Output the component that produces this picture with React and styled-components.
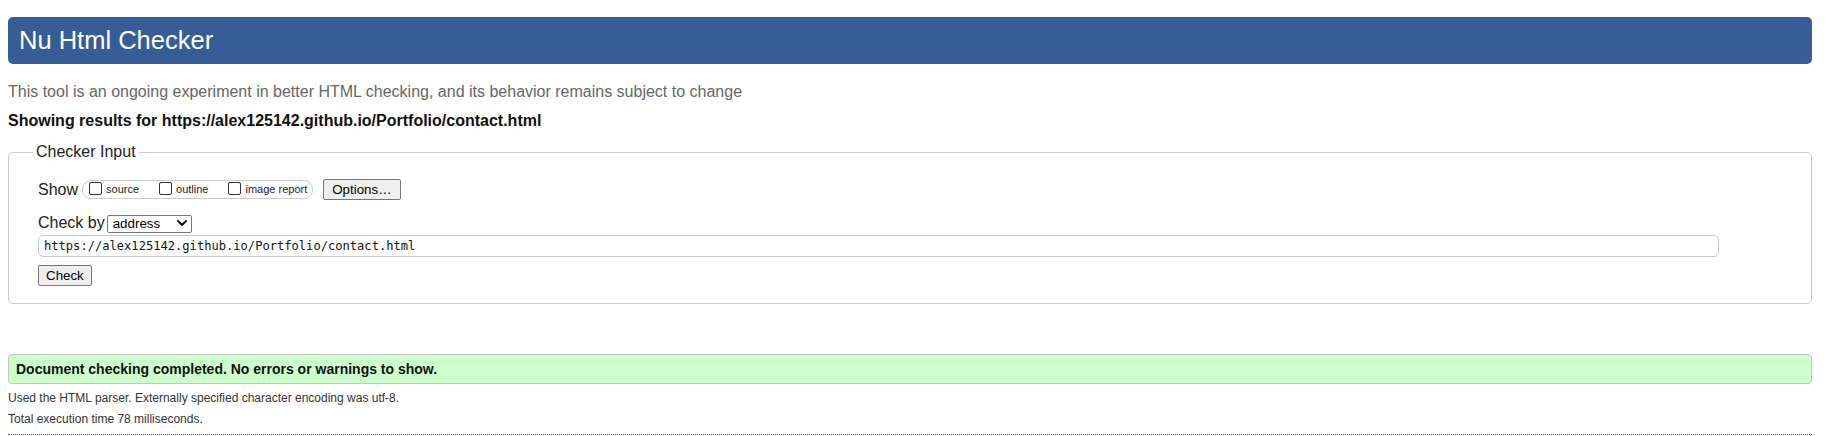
import styled, { createGlobalStyle } from "styled-components";

const GlobalStyle = createGlobalStyle`
  body {
    margin: 0;
    background: #fff;
    color: #000;
    font-family: "Liberation Sans", Arial, sans-serif;
  }
`;

export default function App() {
  return (
    <>
      <GlobalStyle />
      <Page>
        <Header>Nu Html Checker</Header>
        <Tagline>
          This tool is an ongoing experiment in better HTML checking, and its
          behavior remains subject to change
        </Tagline>
        <ResultsFor>
          Showing results for https://alex125142.github.io/Portfolio/contact.html
        </ResultsFor>

        <Fieldset>
          <Legend>Checker Input</Legend>
          <Row $h={21}>
            <FieldLabel $gap={4}>Show</FieldLabel>
            <Pill>
              <OptionBox type="checkbox" id="show-source" />
              <OptionLabel htmlFor="show-source">source</OptionLabel>
              <OptionBox type="checkbox" id="show-outline" />
              <OptionLabel htmlFor="show-outline">outline</OptionLabel>
              <OptionBox type="checkbox" id="show-images" />
              <OptionLabel htmlFor="show-images" $last>
                image report
              </OptionLabel>
            </Pill>
            <Button type="button" $px={8}>
              Options…
            </Button>
          </Row>
          <Row $h={18} $mt={14}>
            <FieldLabel $gap={2}>Check by</FieldLabel>
            <SelectWrap>
              <Select defaultValue="address">
                <option value="address">address</option>
                <option value="upload">file upload</option>
                <option value="textarea">text input</option>
              </Select>
              <Chevron width="10" height="6" viewBox="0 0 10 6">
                <path
                  d="M1 1l4 4 4-4"
                  fill="none"
                  stroke="#000"
                  strokeWidth="1.8"
                  strokeLinecap="round"
                  strokeLinejoin="round"
                />
              </Chevron>
            </SelectWrap>
          </Row>
          <Row $h={22} $mt={3}>
            <UrlInput
              type="url"
              defaultValue="https://alex125142.github.io/Portfolio/contact.html"
            />
          </Row>
          <Row $h={21} $mt={8}>
            <Button type="submit" $px={7}>
              Check
            </Button>
          </Row>
        </Fieldset>

        <Notice>Document checking completed. No errors or warnings to show.</Notice>
        <Details $mt={7}>
          Used the HTML parser. Externally specified character encoding was utf-8.
        </Details>
        <Details $mt={7}>Total execution time 78 milliseconds.</Details>
        <Divider />
      </Page>
    </>
  );
}

const Page = styled.div`
  padding: 17px 18px 0 8px;
`;

const Header = styled.h1`
  margin: 0;
  height: 47px;
  padding: 0 11px;
  border-radius: 5px;
  background: #365d95;
  color: #fff;
  font-size: 25.5px;
  font-weight: normal;
  line-height: 47px;
`;

const Tagline = styled.p`
  margin: 19px 0 0;
  font-size: 16px;
  line-height: 18px;
  color: #666;
`;

const ResultsFor = styled.p`
  margin: 11px 0 0;
  font-size: 16px;
  font-weight: bold;
  line-height: 18px;
  color: #111;
`;

const Fieldset = styled.fieldset`
  margin: 13px 0 0;
  padding: 18px 28px 17px 29px;
  min-width: 0;
  border: 1px solid #ccc;
  border-radius: 5px;
`;

const Legend = styled.legend`
  margin-left: -5px;
  padding: 0 3px;
  font-size: 16px;
  line-height: 18px;
  color: #222;
`;

const Row = styled.div`
  display: flex;
  align-items: center;
  height: ${(p) => p.$h}px;
  margin-top: ${(p) => p.$mt || 0}px;
`;

const FieldLabel = styled.span`
  margin-right: ${(p) => p.$gap}px;
  font-size: 16px;
  line-height: 18px;
  color: #222;
`;

const Pill = styled.span`
  display: inline-flex;
  align-items: center;
  box-sizing: border-box;
  height: 19px;
  margin-right: 10px;
  padding: 0 5px 0 2px;
  border: 1px solid #ccc;
  border-radius: 9px;
`;

const OptionBox = styled.input`
  appearance: none;
  box-sizing: border-box;
  width: 13px;
  height: 13px;
  margin: -2px 3px 0 4px;
  border: 1px solid #333;
  border-radius: 2px;
  background: #fff;
`;

const OptionLabel = styled.label`
  margin-left: 1px;
  margin-right: ${(p) => (p.$last ? 0 : 16)}px;
  font-size: 11px;
  line-height: 13px;
  color: #222;
`;

const Button = styled.button`
  box-sizing: border-box;
  height: 21px;
  padding: 0 ${(p) => p.$px}px;
  border: 1px solid #767676;
  border-radius: 2px;
  background: #efefef;
  color: #000;
  font-family: "Liberation Sans", Arial, sans-serif;
  font-size: 13.33px;
  line-height: 15px;
`;

const SelectWrap = styled.span`
  position: relative;
  display: inline-block;
  height: 18px;
`;

const Select = styled.select`
  appearance: none;
  box-sizing: border-box;
  width: 85px;
  height: 18px;
  margin: 0;
  padding: 0 0 0 5px;
  border: 1px solid #767676;
  border-radius: 2px;
  background: #fff;
  color: #000;
  font-family: "Liberation Sans", Arial, sans-serif;
  font-size: 13.33px;
  line-height: 16px;
`;

const Chevron = styled.svg`
  position: absolute;
  top: 6px;
  right: 5px;
  pointer-events: none;
`;

const UrlInput = styled.input`
  box-sizing: border-box;
  width: calc(100% - 64px);
  height: 22px;
  margin: 0;
  padding: 0 5px;
  border: 1px solid #c8c8c8;
  border-radius: 5px;
  color: #111;
  font-family: "DejaVu Sans Mono", "Liberation Mono", monospace;
  font-size: 12.1px;
`;

const Notice = styled.div`
  box-sizing: border-box;
  height: 30px;
  margin-top: 50px;
  padding: 6px 7px;
  border: 1px solid #c4c4c4;
  border-radius: 4px;
  background: #ccffcc;
  font-size: 14px;
  font-weight: bold;
  line-height: 16px;
  color: #111;
`;

const Details = styled.p`
  margin: ${(p) => p.$mt}px 0 0;
  font-size: 12px;
  line-height: 14px;
  color: #333;
`;

const Divider = styled.div`
  margin-top: 8px;
  border-top: 1px dotted #555;
`;
